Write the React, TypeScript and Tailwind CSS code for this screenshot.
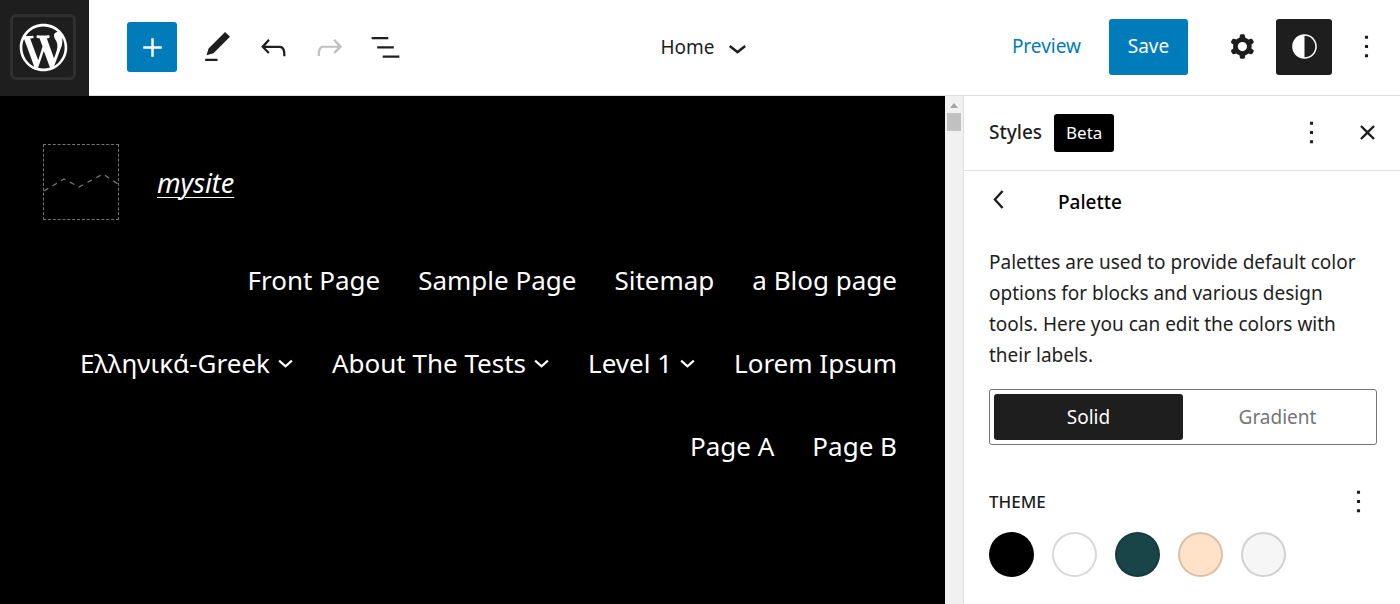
import type { ReactNode } from "react"
import clsx from "clsx"

const icons = {
  wordpress:
    "M20 10c0-5.51-4.49-10-10-10C4.48 0 0 4.49 0 10c0 5.52 4.48 10 10 10 5.51 0 10-4.48 10-10zM7.78 15.37L4.37 6.22c.55-.02 1.17-.08 1.17-.08.5-.06.44-1.13-.06-1.11 0 0-1.45.11-2.37.11-.18 0-.37 0-.58-.01C4.12 2.69 6.87 1.11 10 1.11c2.33 0 4.45.87 6.05 2.34-.68-.11-1.65.39-1.65 1.58 0 .74.45 1.36.9 2.1.35.61.55 1.36.55 2.46 0 1.49-1.4 5-1.4 5l-3.03-8.37c.54-.02.82-.17.82-.17.5-.05.44-1.25-.06-1.22 0 0-1.44.12-2.38.12-.87 0-2.33-.12-2.33-.12-.5-.03-.56 1.2-.06 1.22l.92.08 1.26 3.41zM17.41 10c.24-.64.74-1.87.43-4.25.7 1.29 1.05 2.71 1.05 4.25 0 3.29-1.73 6.24-4.4 7.78.97-2.59 1.94-5.2 2.92-7.78zM6.1 18.09C3.12 16.65 1.11 13.53 1.11 10c0-1.3.23-2.48.72-3.59C3.25 10.3 4.67 14.2 6.1 18.09zm4.03-6.63l2.58 6.98c-.86.29-1.76.45-2.71.45-.79 0-1.57-.11-2.29-.33.81-2.38 1.62-4.74 2.42-7.1z",
  plus: "M18 11.2h-5.2V6h-1.6v5.2H6v1.6h5.2V18h1.6v-5.2H18z",
  edit: "M20.1 5.1L16.9 2 6.2 12.7l-1.3 4.4 4.5-1.3L20.1 5.1zM4 20.8h8v-1.5H4v1.5z",
  undo: "M18.3 11.7c-.6-.6-1.4-.9-2.3-.9H6.7l2.9-3.3-1.1-1-4.5 5L8.5 16l1-1-2.7-2.7H16c.5 0 .9.2 1.3.5 1 1 1 3.4 1 4.5v.3h1.5v-.2c0-1.5 0-4.3-1.5-5.7z",
  redo: "M15.6 6.5l-1.1 1 2.9 3.3H8c-.9 0-1.7.3-2.3.9-1.4 1.5-1.4 4.2-1.4 5.6v.2h1.5v-.3c0-1.1 0-3.5 1-4.5.3-.3.7-.5 1.3-.5h9.2L14.5 15l1.1 1.1 4.6-4.6-4.6-5z",
  listView: "M13.8 5.2H3v1.5h10.8V5.2zm-3.6 12v1.5H21v-1.5H10.2zm7.2-6H6.6v1.5h10.8v-1.5z",
  chevronDown: "M17.5 11.6L12 16l-5.5-4.4.9-1.2L12 14l4.5-3.6 1 1.2z",
  chevronLeft: "M14.6 7l-1.2-1L8 12l5.4 6 1.2-1-4.6-5z",
  cog: "M10.289 4.836A1 1 0 0111.275 4h1.306a1 1 0 01.987.836l.244 1.466c.787.26 1.503.679 2.108 1.218l1.393-.522a1 1 0 011.216.437l.653 1.13a1 1 0 01-.23 1.273l-1.148.944a6.025 6.025 0 010 2.435l1.149.946a1 1 0 01.23 1.272l-.653 1.13a1 1 0 01-1.216.437l-1.394-.522c-.605.54-1.32.958-2.108 1.218l-.244 1.466a1 1 0 01-.987.836h-1.306a1 1 0 01-.986-.836l-.244-1.466a5.995 5.995 0 01-2.108-1.218l-1.394.522a1 1 0 01-1.217-.436l-.653-1.131a1 1 0 01.23-1.272l1.149-.946a6.026 6.026 0 010-2.435l-1.148-.944a1 1 0 01-.23-1.272l.653-1.131a1 1 0 011.217-.437l1.393.522a5.994 5.994 0 012.108-1.218l.244-1.466zM14.929 12a3 3 0 11-6 0 3 3 0 016 0z",
  styles: "M12 4c-4.4 0-8 3.6-8 8s3.6 8 8 8 8-3.6 8-8-3.6-8-8-8zm0 15V5c3.9 0 7 3.1 7 7s-3.1 7-7 7z",
  more: "M13 19h-2v-2h2v2zm0-6h-2v-2h2v2zm0-6h-2V5h2v2z",
  close:
    "M12 13.06l3.712 3.713 1.061-1.06L13.061 12l3.712-3.712-1.06-1.06L12 10.938 8.288 7.227l-1.061 1.06L10.939 12l-3.712 3.712 1.06 1.061L12 13.061z",
}

const Icon = ({ name, className = "size-[37px]" }: { name: keyof typeof icons; className?: string }) => (
  <svg
    viewBox={name === "wordpress" ? "-2 -2 24 24" : "0 0 24 24"}
    fill="currentColor"
    fillRule="evenodd"
    className={clsx("shrink-0", className)}
    aria-hidden="true"
  >
    <path d={icons[name]} />
  </svg>
)

const IconButton = ({
  label,
  className = "size-14",
  disabled,
  children,
}: {
  label: string
  className?: string
  disabled?: boolean
  children: ReactNode
}) => (
  <button
    type="button"
    aria-label={label}
    disabled={disabled}
    className={clsx("flex shrink-0 items-center justify-center rounded-[3px] disabled:text-[#c0c0c0]", className)}
  >
    {children}
  </button>
)

const navItems = [
  { label: "Front Page" },
  { label: "Sample Page" },
  { label: "Sitemap" },
  { label: "a Blog page" },
  { label: "Ελληνικά-Greek", submenu: true },
  { label: "About The Tests", submenu: true },
  { label: "Level 1", submenu: true },
  { label: "Lorem Ipsum" },
  { label: "Page A" },
  { label: "Page B" },
]

const swatches = [
  { name: "Foreground", color: "bg-black" },
  { name: "Background", color: "bg-white" },
  { name: "Primary", color: "bg-[#1a4548]" },
  { name: "Secondary", color: "bg-[#ffe2c7]" },
  { name: "Tertiary", color: "bg-[#f6f6f6]" },
]

const TopBar = () => (
  <header className="grid h-24 shrink-0 grid-cols-[1fr_auto_1fr] items-center border-b border-[#e0e0e0]">
    <div className="flex items-center self-start">
      <a
        href="#dashboard"
        aria-label="Dashboard"
        className="-mb-[2px] flex h-24 w-[89px] shrink-0 items-center bg-[#1e1e1e] pb-[2px] pl-[10px] text-white"
      >
        <span className="flex size-[66px] items-center justify-center rounded-md border-3 border-[#2f2f2f]">
          <Icon name="wordpress" className="size-[57px]" />
        </span>
      </a>
      <IconButton label="Add block" className="mr-3 ml-[38px] size-[50px] bg-[#007cba] text-white">
        <Icon name="plus" />
      </IconButton>
      <IconButton label="Edit">
        <Icon name="edit" />
      </IconButton>
      <IconButton label="Undo">
        <Icon name="undo" />
      </IconButton>
      <IconButton label="Redo" disabled>
        <Icon name="redo" />
      </IconButton>
      <IconButton label="List view">
        <Icon name="listView" />
      </IconButton>
    </div>

    <button type="button" className="flex items-center gap-1 pl-4">
      Home
      <Icon name="chevronDown" />
    </button>

    <div className="flex items-center justify-end gap-[6px] pr-[6px] pb-[2px]">
      <button type="button" className="mr-[22px] text-[#007cba]">
        Preview
      </button>
      <button type="button" className="mr-5 h-14 w-[79px] rounded-[3px] bg-[#007cba] text-white">
        Save
      </button>
      <IconButton label="Settings">
        <Icon name="cog" />
      </IconButton>
      <IconButton label="Styles" className="size-14 bg-[#1e1e1e] text-white">
        <Icon name="styles" />
      </IconButton>
      <IconButton label="Options">
        <Icon name="more" />
      </IconButton>
    </div>
  </header>
)

const Canvas = () => (
  <main className="flex min-w-0 flex-1 flex-col gap-[38px] bg-black pt-12 pr-12 pl-[43px] text-white">
    <div className="flex items-center gap-[38px]">
      <button
        type="button"
        aria-label="Add a site logo"
        className="size-[76px] border border-dashed border-[#757575] text-[#757575]"
      >
        <svg viewBox="0 0 74 74" fill="none" stroke="currentColor" strokeWidth="1.3" strokeDasharray="5 5" aria-hidden="true">
          <path d="M0 46L20 34L35 42L59 29L74 39" />
        </svg>
      </button>
      <a href="#home" className="pt-[2px] text-[27px] italic underline decoration-1 underline-offset-4">
        mysite
      </a>
    </div>
    <nav aria-label="Pages" className="flex flex-wrap justify-end gap-[38px] text-[26px] leading-[45px]">
      {navItems.map((item) => (
        <a key={item.label} href="#page" className="flex items-center gap-[7px]">
          {item.label}
          {item.submenu && (
            <svg viewBox="0 0 12 12" fill="none" stroke="currentColor" strokeWidth="1.5" className="size-[17px]" aria-hidden="true">
              <path d="M1.5 4L6 8L10.5 4" />
            </svg>
          )}
        </a>
      ))}
    </nav>
  </main>
)

const Scrollbar = () => (
  <div className="flex w-[18px] shrink-0 flex-col items-center gap-[5px] bg-[#f1f1f1] pt-[7px]" aria-hidden="true">
    <svg viewBox="0 0 8 5" className="h-[5px] w-2 fill-[#a3a3a3]">
      <path d="M4 0L8 5H0z" />
    </svg>
    <div className="h-[18px] w-[14px] bg-[#c1c1c1]" />
  </div>
)

const StylesSidebar = () => (
  <aside className="w-[437px] shrink-0 border-l border-[#e0e0e0]">
    <div className="flex h-[75px] items-center border-b border-[#e0e0e0] pr-[5px] pb-px pl-[25px]">
      <h2 className="font-medium">Styles</h2>
      <span className="ml-3 flex h-[38px] items-center rounded-[3px] bg-black px-3 text-[17px] text-white">Beta</span>
      <IconButton label="More styles actions" className="ml-auto size-14">
        <Icon name="more" />
      </IconButton>
      <IconButton label="Close styles">
        <Icon name="close" />
      </IconButton>
    </div>

    <div className="pr-[23px] pl-[25px]">
      <div className="flex h-[62px] items-center">
        <IconButton label="Back" className="-ml-2 mr-10 h-[42px] w-[37px] pb-[5px]">
          <Icon name="chevronLeft" />
        </IconButton>
        <h3 className="font-medium text-black">Palette</h3>
      </div>
      <p className="mt-[14px] pr-4 leading-[31px]">
        Palettes are used to provide default color options for blocks and various design tools. Here you can edit the
        colors with their labels.
      </p>

      <div className="mt-[18px] grid h-14 grid-cols-2 rounded-[3px] border border-[#757575] p-1">
        <button type="button" aria-pressed="true" className="rounded-[3px] bg-[#1e1e1e] text-white">
          Solid
        </button>
        <button type="button" aria-pressed="false" className="text-[#757575]">
          Gradient
        </button>
      </div>

      <div className="mt-[38px] flex h-[37px] items-center justify-between">
        <h4 className="text-[17px] font-medium uppercase">Theme</h4>
        <IconButton label="Color options" className="size-[37px]">
          <Icon name="more" />
        </IconButton>
      </div>
      <div className="mt-3 flex gap-[18px]">
        {swatches.map((swatch) => (
          <button
            key={swatch.name}
            type="button"
            aria-label={swatch.name}
            className={clsx("size-[45px] rounded-full border-2 border-black/15", swatch.color)}
          />
        ))}
      </div>
    </div>
  </aside>
)

export default function App() {
  return (
    <div className="flex min-h-screen flex-col bg-white font-['Noto_Sans','Open_Sans',sans-serif] text-[19px] text-[#1e1e1e]">
      <TopBar />
      <div className="flex flex-1">
        <Canvas />
        <Scrollbar />
        <StylesSidebar />
      </div>
    </div>
  )
}
